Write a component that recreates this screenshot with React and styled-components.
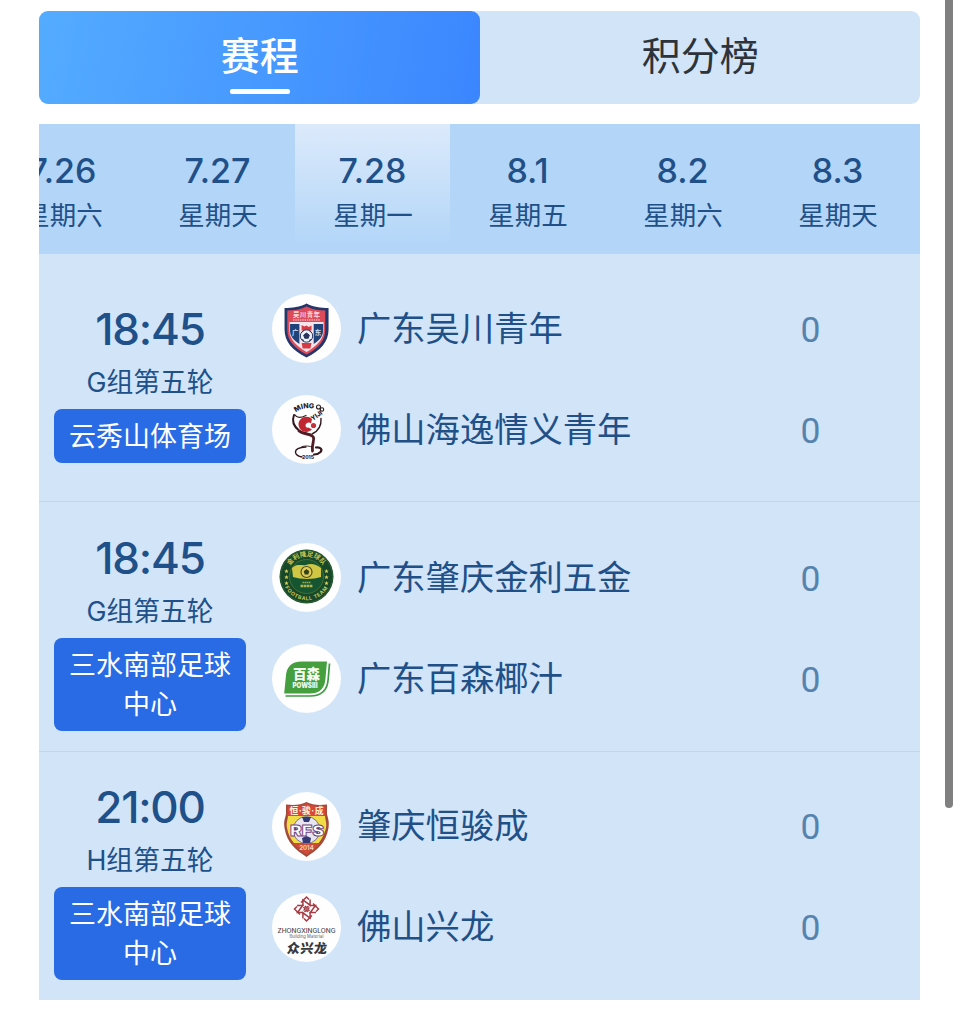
import React, { useState } from "react";
import styled, { createGlobalStyle, css } from "styled-components";

const dates = [
  { day: "7.26", week: "星期六" },
  { day: "7.27", week: "星期天" },
  { day: "7.28", week: "星期一" },
  { day: "8.1", week: "星期五" },
  { day: "8.2", week: "星期六" },
  { day: "8.3", week: "星期天" },
];

const WuchuanLogo = () => (
  <svg viewBox="0 0 90 90">
    <g transform="translate(-4.600 0) scale(1.100 1)">
      <path d="M46.500 18.500C40.500 22 33.500 23 26.500 23V44.500C26.500 56.500 33.500 65.500 46.500 72.500C59.500 65.500 66.500 56.500 66.500 44.500V23C59.500 23 52.500 22 46.500 18.500Z" fill="#25366b" />
      <path d="M46.500 21.500C41 24.500 35 25.500 29 25.500V45C29 55 35 63 46.500 69.500C58 63 63.500 55 63.500 45V25.500C58 25.500 52 24.500 46.500 21.500Z" fill="#dd4a5a" />
      <path d="M31 37H62V46C62 54 56 61 46.500 67C37 61 31 54 31 46Z" fill="#f7e4ea" />
      <path d="M31.500 39H40V59C34.500 55 31.500 51 31.500 46Z" fill="#1f4379" />
      <path d="M61.500 39H53V59C58.500 55 61.500 51 61.500 46Z" fill="#1f4379" />
      <path d="M42 40l2.500 1.500 2-1 2 1.500 2.500-1.500v5h-9Z" fill="#d83a44" />
      <path d="M42 58H51L50 63.500H43Z" fill="#d83a44" />
    </g>
    <circle cx="46.500" cy="51" r="6.200" fill="#eef2fa" stroke="#29335e" strokeWidth="1" />
    <path d="M46.500 48l2.800 2-1 3.200h-3.600l-1-3.200ZM42 47l1.500-1M51 47l-1.500-1M42 54.500l2 1M51 54.500l-2 1" fill="#29335e" stroke="#29335e" strokeWidth="1" />
    <LogoText x="46.500" y="31.800" $size={6.5} $weight={700} $color="#fbdcdc" textLength="27">吴川青年</LogoText>
    <path d="M33 35H60" stroke="#f2a7ae" strokeWidth="1.500" strokeDasharray="1.500 0.800" />
    <LogoText x="35.200" y="50" $size={6.5} $weight={700} $color="#cfdcf2">广</LogoText>
    <LogoText x="58" y="50" $size={6.5} $weight={700} $color="#cfdcf2">东</LogoText>
  </svg>
);

const QingyiLogo = () => (
  <svg viewBox="0 0 90 90">
    <defs>
      <path id="qingyi-arc" d="M35 28C38 23 44 21.500 56 22.500" />
    </defs>
    <g fill="none" stroke="#33181d" strokeLinecap="round">
      <path d="M34 29C32 34 33.500 40 39 44.500C42 47 46 47 50 48.500" strokeWidth="2" />
      <path d="M39 45C44 49 52 47.500 53.500 51.500C54.500 55 51.500 58 52.500 65" stroke="#531c24" strokeWidth="2.800" />
      <path d="M61 32.500C61.500 39 58.500 45 52 48" strokeWidth="1.400" />
      <path d="M46 61C39 61 35 63.500 35.500 66.500C36 69 39 70.500 42 71" strokeWidth="1.300" />
      <path d="M42 60.500C46 59.500 50 60 52 61" strokeWidth="0.900" />
      <path d="M56 61.500C61 61 62.500 63.500 60.500 66C59 67.500 56 68.500 54 68.500" strokeWidth="2.200" />
      <path d="M35 29C37 32.500 42 31.500 46 29.500" strokeWidth="1.200" />
    </g>
    <path d="M52 33C47 28.500 39 31.500 38.500 38C38.500 45.500 47 48.500 52 43.500L48.500 41.500C46 42.500 44.500 39 46.500 37.500C48 36 50 36.500 51 37.500Z" fill="#bf2733" />
    <circle cx="53.500" cy="39.500" r="2.600" fill="#c9303c" />
    <LogoText $size={7} $weight={800} $color="#28191c">
      <textPath href="#qingyi-arc" startOffset="50%">MING</textPath>
    </LogoText>
    <g fill="none" stroke="#28191c" strokeWidth="1.100">
      <circle cx="58.500" cy="21" r="2" />
      <circle cx="62" cy="23.500" r="1.700" />
    </g>
    <LogoText x="57.500" y="31.500" $size={6.5} $weight={800} $color="#28191c" transform="rotate(-35 57.500 31)">YIJI</LogoText>
    <LogoText x="48" y="73" $size={5} $weight={800} $color="#3b282b">2015</LogoText>
  </svg>
);

const JinliLogo = () => (
  <svg viewBox="0 0 90 90">
    <defs>
      <path id="jinli-top" d="M27 42A19.500 19.500 0 0 1 66 42" />
      <path id="jinli-bottom" d="M22.300 42A24.200 24.200 0 0 0 70.700 42" />
    </defs>
    <circle cx="46.500" cy="42.500" r="27" fill="#17482a" />
    <circle cx="46.500" cy="42.500" r="26" fill="none" stroke="#356a35" strokeWidth="0.800" />
    <circle cx="46.500" cy="42.500" r="17" fill="#155532" stroke="#456f32" strokeWidth="1" />
    <path d="M32 34C37 29 42 32 46 31C51 29 56 30 61 34V43C53 45.500 41 45.500 33 43Z" fill="#cfc744" />
    <circle cx="46.500" cy="38" r="5.500" fill="#e0cc52" stroke="#4d4e20" strokeWidth="1.200" />
    <path d="M46.500 35l2.800 2.200-1 3.200h-3.600l-1-3.200Z" fill="#30411f" />
    <path d="M42.500 48.500H50.500" stroke="#a3ab48" strokeWidth="1.400" strokeDasharray="1.600 0.500" />
    <path d="M40.500 52H52.500" stroke="#b1b650" strokeWidth="2.400" strokeDasharray="2.600 0.500" />
    <LogoText $size={6.5} $weight={700} $color="#c5c655">
      <textPath href="#jinli-top" startOffset="50%">金利隆足球队</textPath>
    </LogoText>
    <LogoText $size={5.2} $weight={700} $color="#c5c655" $spacing="0.6px">
      <textPath href="#jinli-bottom" startOffset="50%">FOOTBALL TEAM</textPath>
    </LogoText>
    {[37, 43, 49].map((y) => (
      <g key={y} fill="#d5ce56">
        <path d={`M26.500 ${y - 2}l.700 1.400 1.400.2-1 1 .2 1.400-1.300-.7-1.300.7.2-1.400-1-1 1.400-.2Z`} />
        <path d={`M66.500 ${y - 2}l.700 1.400 1.400.2-1 1 .2 1.400-1.300-.7-1.300.7.2-1.400-1-1 1.400-.2Z`} />
      </g>
    ))}
  </svg>
);

const BaisenLogo = () => (
  <svg viewBox="0 0 90 90">
    <path d="M25.500 61H50C61 61 67.500 55 68.200 44L69.500 28.500" fill="none" stroke="#3e9a45" strokeWidth="1.700" />
    <path d="M67 26.500H42C31 26.500 26.500 32 25.800 42L24.200 58.500H50C60 58.500 65 53 65.500 43Z" fill="#459f3f" />
    <LogoText x="46.500" y="44.200" $size={13.5} $weight={900} $color="#f6fbf2">百森</LogoText>
    <LogoText x="45" y="53.300" $size={7.8} $weight={900} $color="#edf6e8" textLength="25" lengthAdjust="spacingAndGlyphs">POWSIII</LogoText>
  </svg>
);

const HengjunLogo = () => (
  <svg viewBox="0 0 90 90">
    <path d="M46.500 19C41 22 34 22.500 26 21.500V31C25 36 23.500 38 24.500 45C27 60 36 67 46.500 74C57 67 66 60 68.500 45C69.500 38 68 36 67 31V21.500C59 22.500 52 22 46.500 19Z" fill="#a34b3b" />
    <path d="M28 32H65C65 37 67 39 66 45C63 57 56 64 46.500 71C37 64 29 57 27 45C26 39 28 37 28 32Z" fill="#f2dc46" />
    <path d="M46.500 20.500C41 23.500 34 24 27.500 23.500V33H65.500V23.500C59 24 52 23.500 46.500 20.500Z" fill="#d8473a" />
    <path d="M33 60H60C56 65 51 68 46.500 71.500C42 68 37 65 33 60Z" fill="#cf4a38" />
    <circle cx="46.500" cy="47" r="13.500" fill="#e9e5f0" stroke="#5c5691" strokeWidth="0.800" />
    <path d="M42 34h9l-2 5h-5ZM33.500 44l4 2-2 5ZM59.500 44l-4 2 2 5ZM42 55l4.500-2 4.500 2-1 5h-7Z" fill="#343a75" />
    <LogoText x="46.500" y="31" $size={8.8} $weight={700} $color="#fff5d9" textLength="34">恒·骏·成</LogoText>
    <LogoText x="47" y="52.800" $size={14.5} $weight={900} $color="#fff" $outline="#6c4482" textLength="34" lengthAdjust="spacingAndGlyphs">RFS</LogoText>
    <LogoText x="46.500" y="66.500" $size={6} $weight={700} $color="#f4d6b4">2014</LogoText>
  </svg>
);

const XinglongLogo = () => (
  <svg viewBox="0 0 90 90">
    {/* four N marks, each one turned a quarter from the last */}
    <g transform="translate(46.500 25)" fill="none" stroke="#a53b44" strokeWidth="1.500">
      {[0, 90, 180, 270].map((turn) => (
        <g key={turn} transform={`rotate(${turn})`}>
          <path d="M-3.600 -3.200V-9L3.600 -3.800V-9.500" />
          <path d="M-5.500 -6.500L0 -12L2.500 -9.500" />
          <path d="M-1.500 -3L0 -1.200L2 -3" />
        </g>
      ))}
    </g>
    <LogoText x="46.500" y="49" $size={6} $weight={500} $color="#54464b" textLength="58" lengthAdjust="spacingAndGlyphs">ZHONGXINGLONG</LogoText>
    <LogoText x="46.500" y="54" $size={4.2} $weight={400} $color="#5f585d" textLength="34">Building Material</LogoText>
    <g transform="translate(46.500 69) skewX(-6)">
      <LogoText x="0" y="0" $size={13} $weight={900} $color="#37383d" textLength="40">众兴龙</LogoText>
    </g>
  </svg>
);

const matches = [
  {
    time: "18:45",
    round: "G组第五轮",
    venue: "云秀山体育场",
    teams: [
      { name: "广东吴川青年", score: 0, Logo: WuchuanLogo },
      { name: "佛山海逸情义青年", score: 0, Logo: QingyiLogo },
    ],
  },
  {
    time: "18:45",
    round: "G组第五轮",
    venue: "三水南部足球中心",
    teams: [
      { name: "广东肇庆金利五金", score: 0, Logo: JinliLogo },
      { name: "广东百森椰汁", score: 0, Logo: BaisenLogo },
    ],
  },
  {
    time: "21:00",
    round: "H组第五轮",
    venue: "三水南部足球中心",
    teams: [
      { name: "肇庆恒骏成", score: 0, Logo: HengjunLogo },
      { name: "佛山兴龙", score: 0, Logo: XinglongLogo },
    ],
  },
];

const App = () => {
  const [tab, setTab] = useState("schedule");
  const [activeDate, setActiveDate] = useState("7.28");

  return (
    <>
      <GlobalStyle />
      <Page>
        <Content>
          <Tabs>
            <Tab $active={tab === "schedule"} onClick={() => setTab("schedule")}>
              赛程
            </Tab>
            <Tab $active={tab === "table"} onClick={() => setTab("table")}>
              积分榜
            </Tab>
          </Tabs>
          <DateStrip>
            {dates.map(({ day, week }) => (
              <DateItem
                key={day}
                $active={day === activeDate}
                onClick={() => setActiveDate(day)}
              >
                <Day>{day}</Day>
                <Week>{week}</Week>
              </DateItem>
            ))}
          </DateStrip>
          {matches.map((match, index) => (
            <Match key={index}>
              <Info>
                <Time>{match.time}</Time>
                <Round>{match.round}</Round>
                <Venue>{match.venue}</Venue>
              </Info>
              <Teams>
                {match.teams.map(({ name, score, Logo }) => (
                  <Team key={name}>
                    <Crest>
                      <Logo />
                    </Crest>
                    <TeamName>{name}</TeamName>
                    <Score>{score}</Score>
                  </Team>
                ))}
              </Teams>
            </Match>
          ))}
        </Content>
        <ScrollThumb />
      </Page>
    </>
  );
};

export default App;

const GlobalStyle = createGlobalStyle`
  * {
    box-sizing: border-box;
  }
  body {
    margin: 0;
    background: #fefffe;
    font-family: Inter, "Noto Sans CJK SC", sans-serif;
  }
  button {
    border: none;
    padding: 0;
    background: none;
    font-family: inherit;
    cursor: pointer;
  }
`;

const Page = styled.main`
  display: flex;
  width: 960px;
  height: 1026px;
  overflow: hidden;
`;

const Content = styled.div`
  width: 881px;
  margin: 11px 0 0 39.4px;
`;

const Tabs = styled.nav`
  display: flex;
  height: 93px;
  margin-bottom: 20px;
  background: #d2e4f8;
  border-radius: 9px;
`;

const Tab = styled.button`
  flex: 1;
  display: flex;
  flex-direction: column;
  align-items: center;
  padding-top: 17px;
  border-radius: 9px;
  color: #2d333b;
  font-size: 39px;
  line-height: 56px;
  ${({ $active }) =>
    $active &&
    css`
      background: linear-gradient(100deg, #54acff, #3b86ff);
      color: #fff;
      font-weight: 500;
      &::after {
        content: "";
        width: 60px;
        height: 5px;
        margin-top: 5px;
        border-radius: 2px;
        background: #fff;
      }
    `}
`;

const DateStrip = styled.div`
  display: flex;
  height: 130px;
  overflow: hidden;
  background: #b3d6f8;
`;

const DateItem = styled.button`
  flex: 0 0 155px;
  display: flex;
  flex-direction: column;
  align-items: center;
  padding-top: 26px;
  color: #215088;
  &:first-child {
    margin-left: -54.4px;
  }
  ${({ $active }) =>
    $active &&
    css`
      background: linear-gradient(#dceafb, #b3d6f8 92%);
    `}
`;

const Day = styled.span`
  font-size: 34px;
  font-weight: 500;
  line-height: 42px;
`;

const Week = styled.span`
  margin: 4px 0 0 1px;
  font-size: 26.5px;
  line-height: 38px;
`;

const Match = styled.article`
  display: flex;
  align-items: center;
  height: 250px;
  padding-top: 3px;
  background: #d2e4f8;
  & + & {
    border-top: 1px solid #c0d7ee;
  }
  &:first-of-type {
    height: 247px;
  }
  &:last-of-type {
    height: 249px;
    padding-top: 1px;
  }
`;

const Info = styled.div`
  display: flex;
  flex-direction: column;
  align-items: center;
  width: 192px;
  margin-left: 14.6px;
  padding-top: 6px;
  color: #205089;
`;

const Time = styled.div`
  font-size: 44px;
  font-weight: 500;
  line-height: 54px;
  letter-spacing: -1.2px;
`;

const Round = styled.div`
  margin-top: 7px;
  font-size: 26.8px;
  line-height: 38px;
`;

const Venue = styled.div`
  width: 192px;
  margin-top: 8px;
  padding: 8px 14px 7px;
  border-radius: 8px;
  background: #286be5;
  color: #fff;
  font-size: 27px;
  line-height: 39px;
  text-align: center;
`;

const Teams = styled.div`
  flex: 1;
  display: flex;
  flex-direction: column;
  gap: 32px;
  margin-left: 26px;
`;

const Team = styled.div`
  display: flex;
  align-items: center;
  height: 69px;
`;

const Crest = styled.div`
  flex: none;
  width: 69px;
  height: 69px;
  border-radius: 50%;
  background: #fefefe;
  svg {
    display: block;
    width: 90px;
    height: 90px;
    margin: -9px 0 0 -12px;
  }
`;

const LogoText = styled.text`
  font-family: Inter, "Noto Sans CJK SC", sans-serif;
  font-size: ${({ $size }) => $size}px;
  font-weight: ${({ $weight }) => $weight};
  fill: ${({ $color }) => $color};
  stroke: ${({ $outline }) => $outline || "none"};
  stroke-width: 0.8px;
  letter-spacing: ${({ $spacing }) => $spacing || "normal"};
  text-anchor: middle;
`;

const TeamName = styled.div`
  flex: 1;
  margin-left: 16px;
  color: #215088;
  font-size: 34.3px;
  line-height: 50px;
`;

const Score = styled.div`
  width: 60px;
  margin-right: 80px;
  padding-top: 2px;
  color: #5683ae;
  font-family: Roboto, sans-serif;
  font-size: 35.5px;
  font-weight: 400;
  text-align: center;
`;

const ScrollThumb = styled.div`
  width: 8px;
  height: 808px;
  margin-left: 24.6px;
  border-radius: 0 0 4px 4px;
  background: #808080;
`;
